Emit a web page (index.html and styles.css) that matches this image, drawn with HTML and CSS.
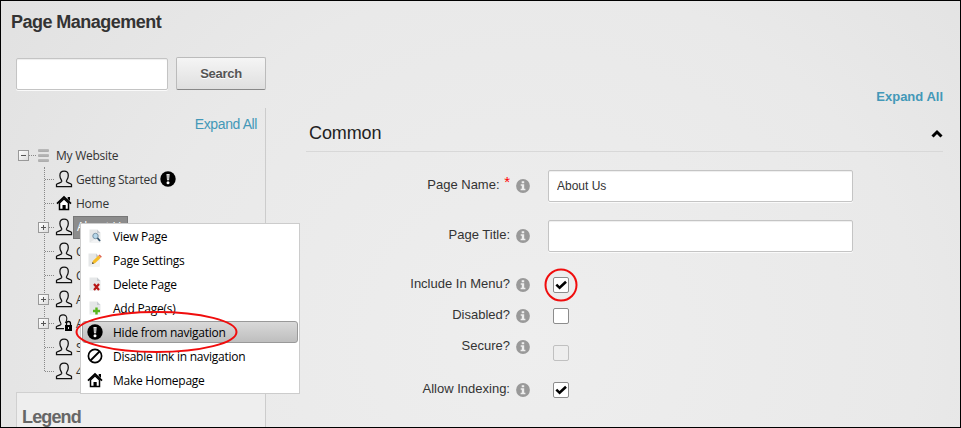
FILE: index.html
```html
<!DOCTYPE html>
<html lang="en">
<head>
<meta charset="utf-8">
<title>Page Management</title>
<link rel="stylesheet" href="styles.css">
</head>
<body>
<svg class="defs" width="0" height="0" aria-hidden="true">
  <defs>
    <symbol id="user" viewBox="0 0 18 18"><path d="M1.500 16.500h15v-2.100c-1-1.300-4.600-1.500-5.100-2.900-.3-1.300 1.900-2.600 1.900-6.100 0-2.700-1.400-4.400-4.200-4.400s-4.200 1.700-4.200 4.400c0 3.500 2.200 4.800 1.800 6.100-.5 1.400-4.200 1.600-5.200 2.900z" fill="none" stroke="#111" stroke-width="1.250"/></symbol>
    <symbol id="home" viewBox="0 0 16 16"><path d="M1 8.700 8 2l7 6.700" fill="none" stroke="#000" stroke-width="1.800"/><path d="M11.700 2H14v4l-2.300-2z"/><path d="M3.500 8v6.500h9V8L8 3.700z" fill="#fff" stroke="#000" stroke-width="1.500"/><path d="M6.500 10h3.200v5H6.500z"/></symbol>
    <symbol id="alert" viewBox="0 0 16 16"><circle cx="8" cy="8" r="7.700"/><path d="M6.500 3h3.100l-.5 6.300H7z" fill="#fff"/><path d="M8 3.600v5" stroke="#444" stroke-width=".7"/><circle cx="8" cy="11.800" r="1.500" fill="#fff"/></symbol>
    <symbol id="info" viewBox="0 0 14 14"><circle cx="7" cy="7" r="6.900" fill="#999"/><path d="M5.700 2.200h2.500v2H5.700zM4.700 5.200h3.500v4.500h1.200v1.500H4.600V9.700h1.200v-3H4.700z" fill="#eee"/></symbol>
    <symbol id="page" viewBox="0 0 12 14"><path d="M.5.5H8L11.500 4v9.500H.5z" fill="#e5e7e8"/><path d="M8 .5 11.500 4v9.500H.5L11.500 7V4H8z" fill="#f2f3f4"/><path d="M8 .5 11.500 4H8z" fill="#c6cbd0"/></symbol>
  </defs>
</svg>
<div class="frame">
  <h1>Page Management</h1>
  <div class="columns">
    <aside>
      <div class="search"><input type="text" aria-label="Search pages"><button>Search</button></div>
      <div class="sidebar">
        <a class="expand">Expand All</a>
        <div class="tree">
          <div class="root"><span class="toggle minus"></span><span class="dash"></span><span class="stack"><i></i><i></i><i></i></span><span>My Website</span></div>
          <div class="children">
            <div class="node"><svg><use href="#user"/></svg><span>Getting Started</span><svg class="alert"><use href="#alert"/></svg></div>
            <div class="node"><svg class="house"><use href="#home"/></svg><span>Home</span></div>
            <div class="node open"><b class="toggle"></b><svg><use href="#user"/></svg><span class="selected">About Us</span></div>
            <div class="node"><svg><use href="#user"/></svg><span>C</span></div>
            <div class="node"><svg><use href="#user"/></svg><span>C</span></div>
            <div class="node open"><b class="toggle"></b><svg><use href="#user"/></svg><span>A</span></div>
            <div class="node open"><b class="toggle"></b><svg viewBox="0 0 18 18"><use href="#user" width="16" height="16"/><path d="M9 9h8v9H9z" fill="#e8e8e8"/><path d="M10 11h7v6h-7z"/><path d="M11.500 11V9.500a2 2 0 0 1 4 0V11" fill="none" stroke="#000" stroke-width="1.300"/><path d="M13 13h1v2h-1z" fill="#ddd"/></svg><span>A</span></div>
            <div class="node"><svg><use href="#user"/></svg><span>S</span></div>
            <div class="node"><svg><use href="#user"/></svg><span>4</span></div>
          </div>
        </div>
        <section class="legend"><h2>Legend</h2></section>
      </div>
    </aside>
    <main>
      <a class="expand strong">Expand All</a>
      <header><h3>Common</h3><svg width="12" height="9" viewBox="0 0 12 9"><path d="M1.500 7.500 6 3 10.500 7.500" fill="none" stroke="#000" stroke-width="3"/></svg></header>
      <form>
        <div class="row r1"><label>Page Name: <sup>*</sup></label><svg class="info"><use href="#info"/></svg><input type="text" value="About Us"></div>
        <div class="row r2"><label>Page Title:</label><svg class="info"><use href="#info"/></svg><input type="text"></div>
        <div class="row r3"><label>Include In Menu?</label><svg class="info"><use href="#info"/></svg><span class="check"><svg viewBox="0 0 12 12"><path d="M2 5.700 4.800 8.400 10.300 3.200" /></svg></span></div>
        <div class="row r4"><label>Disabled?</label><svg class="info"><use href="#info"/></svg><span class="check"></span></div>
        <div class="row r5"><label>Secure?</label><svg class="info"><use href="#info"/></svg><span class="check off"></span></div>
        <div class="row r6"><label>Allow Indexing:</label><svg class="info"><use href="#info"/></svg><span class="check"><svg viewBox="0 0 12 12"><path d="M2 5.700 4.800 8.400 10.300 3.200" /></svg></span></div>
      </form>
    </main>
  </div>
  <div class="menu">
    <div class="item"><svg viewBox="0 0 16 16"><use href="#page" x="2" y="1" width="12" height="14"/><circle cx="8.500" cy="8" r="2.700" fill="#b6d7ea" stroke="#7893a5"/><path d="m10.500 10 2.500 3" stroke="#31536c" stroke-width="1.800"/></svg><span>View Page</span></div>
    <div class="item"><svg viewBox="0 0 16 16"><use href="#page" x="1" y="1" width="12" height="14"/><path d="m5 12 .8-3 5.700-5.500 2.300 2.300L8 11.300z" fill="#f6bd27"/><path d="m11.500 3.500 1.200-1 2.200 2.200-1.100 1.100z" fill="#df6655"/><path d="m5 12 .5-2 1.500 1.500z" fill="#444"/></svg><span>Page Settings</span></div>
    <div class="item"><svg viewBox="0 0 16 16"><use href="#page" x="2" y="1" width="12" height="14"/><path d="m7 8 5 6m0-6-5 6" stroke="#b81818" stroke-width="2.200"/></svg><span>Delete Page</span></div>
    <div class="item"><svg viewBox="0 0 16 16"><use href="#page" x="2" y="1" width="12" height="14"/><path d="M9.500 7.500v7M6 11h7" stroke="#59b51c" stroke-width="2.400"/></svg><span>Add Page(s)</span></div>
    <div class="item hover"><svg><use href="#alert"/></svg><span>Hide from navigation</span></div>
    <div class="item"><svg viewBox="0 0 16 16"><circle cx="8" cy="8" r="6.600" fill="none" stroke="#000" stroke-width="1.700"/><path d="m3.500 12.500 9-9" stroke="#000" stroke-width="1.800"/></svg><span>Disable link in navigation</span></div>
    <div class="item"><svg><use href="#home"/></svg><span>Make Homepage</span></div>
  </div>
  <svg class="marks" width="961" height="428"><ellipse cx="156.500" cy="332" rx="80" ry="20"/><circle cx="561" cy="285" r="15.500"/></svg>
</div>
</body>
</html>
```

FILE: styles.css
```css
* { box-sizing: border-box; }
body { margin: 0; font-family: "Liberation Sans", Arial, sans-serif; color: #333; }
.defs { position: absolute; }
.frame { position: relative; width: 961px; height: 428px; overflow: hidden; border: 1px solid #000; background: radial-gradient(ellipse 650px 600px at 55% 80%, #eeeeee, #e9e9e9 60%, #e1e1e1); }
h1, h2, h3 { margin: 0; }
h1 { height: 56px; padding: 10px 0 0 10px; font-size: 18px; line-height: 22px; letter-spacing: -.53px; }
.columns { display: flex; }
aside { width: 250px; margin-left: 15px; }
.search { display: flex; align-items: flex-end; gap: 8px; height: 33px; }
input { height: 32px; padding: 0 8px; border: 1px solid #c4c4c4; border-radius: 2px; background: #fff; box-shadow: 0 1px 0 #fafafa, inset 0 1px 1px #eee; font: 12px "Liberation Sans", sans-serif; color: #333; }
.search input { width: 152px; }
button { width: 90px; height: 33px; padding: 0; border: 1px solid #bbb; border-bottom-color: #888; border-radius: 2px; background: linear-gradient(#f5f5f5, #dfdfdf); font: bold 13px "Liberation Sans", sans-serif; letter-spacing: -.3px; color: #555; text-shadow: 0 1px #fff; }
.sidebar { display: flex; flex-direction: column; height: 322px; margin-top: 18px; border-right: 1px solid #ccc; }
.expand { color: #4398b8; font-size: 14px; line-height: 18px; }
.sidebar .expand { flex: none; align-self: flex-end; height: 35px; padding: 7px 8px 0 0; letter-spacing: -.4px; }
.tree { flex: none; height: 249px; font-family: "Open Sans", sans-serif; font-size: 12px; letter-spacing: -.25px; }
.root, .node { display: flex; align-items: center; height: 24px; }
.root { padding-left: 2px; }
.toggle { flex: none; width: 11px; height: 11px; border: 1px solid #999; background: linear-gradient(#555, #555) center / 5px 1px no-repeat, linear-gradient(#555, #555) center / 1px 5px no-repeat, linear-gradient(135deg, #fff, #ddd); }
.toggle.minus { background: linear-gradient(#555, #555) center / 5px 1px no-repeat, linear-gradient(135deg, #fff, #ddd); }
.dash { width: 7px; border-top: 1px dotted #888; }
.stack { display: grid; gap: 2px; width: 11px; margin: 0 7px 0 2px; }
.stack i { height: 3px; border-radius: 1px; background: linear-gradient(#bbb, #aaa); }
.children { height: 204px; margin-left: 28px; border-left: 1px dotted #888; }
.node { padding-left: 10px; background: repeating-linear-gradient(90deg, #888 0 1px, transparent 1px 2px) 0 12px / 10px 1px no-repeat; }
.node svg { flex: none; width: 18px; height: 18px; margin-right: 3px; }
.node .house { width: 16px; height: 16px; margin: 0 4px 0 1px; }
.node .alert { width: 16px; height: 16px; margin: 0 0 0 3px; }
.open { padding-left: 0; }
.open .toggle { margin: 0 6px 0 -7px; }
.selected { width: 55px; height: 23px; margin-left: -3px; padding-left: 3px; border: 1px solid #777; background: #8c8c8c; color: #fff; line-height: 20px; overflow: hidden; white-space: nowrap; }
.legend { flex: 1 0 auto; border: 1px solid #d0d0d0; border-right: 0; background: #eee; padding: 13px 5px; }
h2 { color: #666; font-size: 18px; line-height: 22px; letter-spacing: -.85px; }
main { width: 637px; margin-left: 40px; padding-top: 31px; }
.strong { display: block; text-align: right; font-weight: bold; font-size: 13px; height: 18px; line-height: 17px; }
header { display: flex; align-items: center; justify-content: space-between; height: 46px; padding: 9px 0 0 3px; border-bottom: 1px solid #d8d8d8; }
h3 { color: #222; font-size: 18px; font-weight: normal; letter-spacing: -.1px; }
form { padding-top: 18px; }
.row { display: flex; align-items: center; height: 32px; }
label { width: 204px; padding-bottom: 2px; text-align: right; font-size: 13px; line-height: 16px; white-space: nowrap; }
sup { color: red; font-size: 15px; line-height: 0; vertical-align: 2px; margin-left: 1px; }
.info { width: 14px; height: 14px; margin: 0 18px 0 6px; }
.row input { width: 305px; }
.r2 { margin-top: 18px; }
.r3 { margin-top: 17px; }
.r4, .r5 { height: 31px; }
.r4 { margin-top: -1px; }
.r6 { margin-top: 12px; }
.check { display: block; width: 16px; height: 16px; margin-left: 5px; border: 1px solid #8c8c8c; border-radius: 2px; background: #fff; }
.check svg { display: block; width: 14px; height: 14px; }
.check path { fill: none; stroke: #000; stroke-width: 2.2; }
.off { margin-top: 12px; border-color: #c0c0c0; background: #eee; }
.menu { position: absolute; left: 79px; top: 222px; width: 220px; height: 171px; padding: 1px; border: 1px solid #ccc; background: #fff; color: #000; font-family: "Open Sans", sans-serif; font-size: 12px; letter-spacing: -.25px; }
.item { display: flex; align-items: center; height: 22px; margin-bottom: 2px; padding: 0 0 0 4px; border: 1px solid transparent; border-radius: 3px; }
.item svg { width: 16px; height: 16px; margin-right: 10px; }
.hover { border-color: #999; background: linear-gradient(#d9d9d9, #bebebe); }
.marks { position: absolute; left: -1px; top: -1px; fill: none; stroke: #f00d0d; stroke-width: 2; pointer-events: none; }
```
